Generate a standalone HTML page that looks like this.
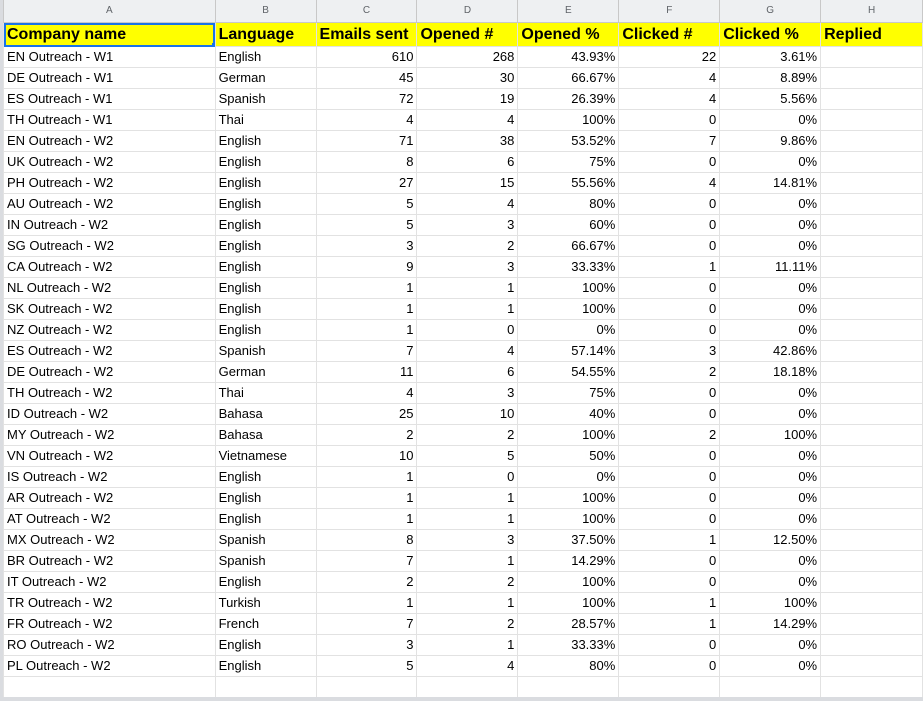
<!DOCTYPE html>
<html><head><meta charset="utf-8"><style>
body{margin:0;width:923px;height:701px;overflow:hidden;background:#fff;font-family:"Liberation Sans",Arial,sans-serif;position:relative}
.gut{position:absolute;left:0;top:0;width:3px;height:701px;background:#dadce0}
table{position:absolute;left:3px;top:0;border-collapse:collapse;table-layout:fixed}
td{border:1px solid #e2e2e2;padding:0 3px;font-size:13px;height:20px;line-height:20px;white-space:nowrap;overflow:hidden;color:#000}
tr.ch td{background:#eef0f2;color:#5f6368;font-size:10px;text-align:center;height:22px;border-color:#c8c8c8;border-top:none}
tr.h td{background:#ffff00;font-weight:bold;font-size:16px;height:23px;line-height:23px}
td.r{text-align:right}
.sel{outline:2px solid #1a73e8;outline-offset:-2px;position:relative}
.sel:after{content:"";position:absolute;right:-3px;bottom:-3px;width:6px;height:6px;background:#1a73e8}
.sb{position:absolute;left:3px;top:697px;width:920px;height:4px;background:#dadce0}
</style></head><body>
<div class="gut"></div>
<table>
<colgroup><col style="width:212px"><col style="width:101px"><col style="width:101px"><col style="width:101px"><col style="width:101px"><col style="width:101px"><col style="width:101px"><col style="width:102px"></colgroup>
<tr class="ch"><td>A</td><td>B</td><td>C</td><td>D</td><td>E</td><td>F</td><td>G</td><td>H</td></tr>
<tr class="h"><td class="sel">Company name</td><td>Language</td><td>Emails sent</td><td>Opened #</td><td>Opened %</td><td>Clicked #</td><td>Clicked %</td><td>Replied</td></tr>
<tr><td>EN Outreach - W1</td><td>English</td><td class="r">610</td><td class="r">268</td><td class="r">43.93%</td><td class="r">22</td><td class="r">3.61%</td><td></td></tr>
<tr><td>DE Outreach - W1</td><td>German</td><td class="r">45</td><td class="r">30</td><td class="r">66.67%</td><td class="r">4</td><td class="r">8.89%</td><td></td></tr>
<tr><td>ES Outreach - W1</td><td>Spanish</td><td class="r">72</td><td class="r">19</td><td class="r">26.39%</td><td class="r">4</td><td class="r">5.56%</td><td></td></tr>
<tr><td>TH Outreach - W1</td><td>Thai</td><td class="r">4</td><td class="r">4</td><td class="r">100%</td><td class="r">0</td><td class="r">0%</td><td></td></tr>
<tr><td>EN Outreach - W2</td><td>English</td><td class="r">71</td><td class="r">38</td><td class="r">53.52%</td><td class="r">7</td><td class="r">9.86%</td><td></td></tr>
<tr><td>UK Outreach - W2</td><td>English</td><td class="r">8</td><td class="r">6</td><td class="r">75%</td><td class="r">0</td><td class="r">0%</td><td></td></tr>
<tr><td>PH Outreach - W2</td><td>English</td><td class="r">27</td><td class="r">15</td><td class="r">55.56%</td><td class="r">4</td><td class="r">14.81%</td><td></td></tr>
<tr><td>AU Outreach - W2</td><td>English</td><td class="r">5</td><td class="r">4</td><td class="r">80%</td><td class="r">0</td><td class="r">0%</td><td></td></tr>
<tr><td>IN Outreach - W2</td><td>English</td><td class="r">5</td><td class="r">3</td><td class="r">60%</td><td class="r">0</td><td class="r">0%</td><td></td></tr>
<tr><td>SG Outreach - W2</td><td>English</td><td class="r">3</td><td class="r">2</td><td class="r">66.67%</td><td class="r">0</td><td class="r">0%</td><td></td></tr>
<tr><td>CA Outreach - W2</td><td>English</td><td class="r">9</td><td class="r">3</td><td class="r">33.33%</td><td class="r">1</td><td class="r">11.11%</td><td></td></tr>
<tr><td>NL Outreach - W2</td><td>English</td><td class="r">1</td><td class="r">1</td><td class="r">100%</td><td class="r">0</td><td class="r">0%</td><td></td></tr>
<tr><td>SK Outreach - W2</td><td>English</td><td class="r">1</td><td class="r">1</td><td class="r">100%</td><td class="r">0</td><td class="r">0%</td><td></td></tr>
<tr><td>NZ Outreach - W2</td><td>English</td><td class="r">1</td><td class="r">0</td><td class="r">0%</td><td class="r">0</td><td class="r">0%</td><td></td></tr>
<tr><td>ES Outreach - W2</td><td>Spanish</td><td class="r">7</td><td class="r">4</td><td class="r">57.14%</td><td class="r">3</td><td class="r">42.86%</td><td></td></tr>
<tr><td>DE Outreach - W2</td><td>German</td><td class="r">11</td><td class="r">6</td><td class="r">54.55%</td><td class="r">2</td><td class="r">18.18%</td><td></td></tr>
<tr><td>TH Outreach - W2</td><td>Thai</td><td class="r">4</td><td class="r">3</td><td class="r">75%</td><td class="r">0</td><td class="r">0%</td><td></td></tr>
<tr><td>ID Outreach - W2</td><td>Bahasa</td><td class="r">25</td><td class="r">10</td><td class="r">40%</td><td class="r">0</td><td class="r">0%</td><td></td></tr>
<tr><td>MY Outreach - W2</td><td>Bahasa</td><td class="r">2</td><td class="r">2</td><td class="r">100%</td><td class="r">2</td><td class="r">100%</td><td></td></tr>
<tr><td>VN Outreach - W2</td><td>Vietnamese</td><td class="r">10</td><td class="r">5</td><td class="r">50%</td><td class="r">0</td><td class="r">0%</td><td></td></tr>
<tr><td>IS Outreach - W2</td><td>English</td><td class="r">1</td><td class="r">0</td><td class="r">0%</td><td class="r">0</td><td class="r">0%</td><td></td></tr>
<tr><td>AR Outreach - W2</td><td>English</td><td class="r">1</td><td class="r">1</td><td class="r">100%</td><td class="r">0</td><td class="r">0%</td><td></td></tr>
<tr><td>AT Outreach - W2</td><td>English</td><td class="r">1</td><td class="r">1</td><td class="r">100%</td><td class="r">0</td><td class="r">0%</td><td></td></tr>
<tr><td>MX Outreach - W2</td><td>Spanish</td><td class="r">8</td><td class="r">3</td><td class="r">37.50%</td><td class="r">1</td><td class="r">12.50%</td><td></td></tr>
<tr><td>BR Outreach - W2</td><td>Spanish</td><td class="r">7</td><td class="r">1</td><td class="r">14.29%</td><td class="r">0</td><td class="r">0%</td><td></td></tr>
<tr><td>IT Outreach - W2</td><td>English</td><td class="r">2</td><td class="r">2</td><td class="r">100%</td><td class="r">0</td><td class="r">0%</td><td></td></tr>
<tr><td>TR Outreach - W2</td><td>Turkish</td><td class="r">1</td><td class="r">1</td><td class="r">100%</td><td class="r">1</td><td class="r">100%</td><td></td></tr>
<tr><td>FR Outreach - W2</td><td>French</td><td class="r">7</td><td class="r">2</td><td class="r">28.57%</td><td class="r">1</td><td class="r">14.29%</td><td></td></tr>
<tr><td>RO Outreach - W2</td><td>English</td><td class="r">3</td><td class="r">1</td><td class="r">33.33%</td><td class="r">0</td><td class="r">0%</td><td></td></tr>
<tr><td>PL Outreach - W2</td><td>English</td><td class="r">5</td><td class="r">4</td><td class="r">80%</td><td class="r">0</td><td class="r">0%</td><td></td></tr>
<tr><td></td><td></td><td></td><td></td><td></td><td></td><td></td><td></td></tr>
</table>
<div class="sb"></div>
</body></html>
